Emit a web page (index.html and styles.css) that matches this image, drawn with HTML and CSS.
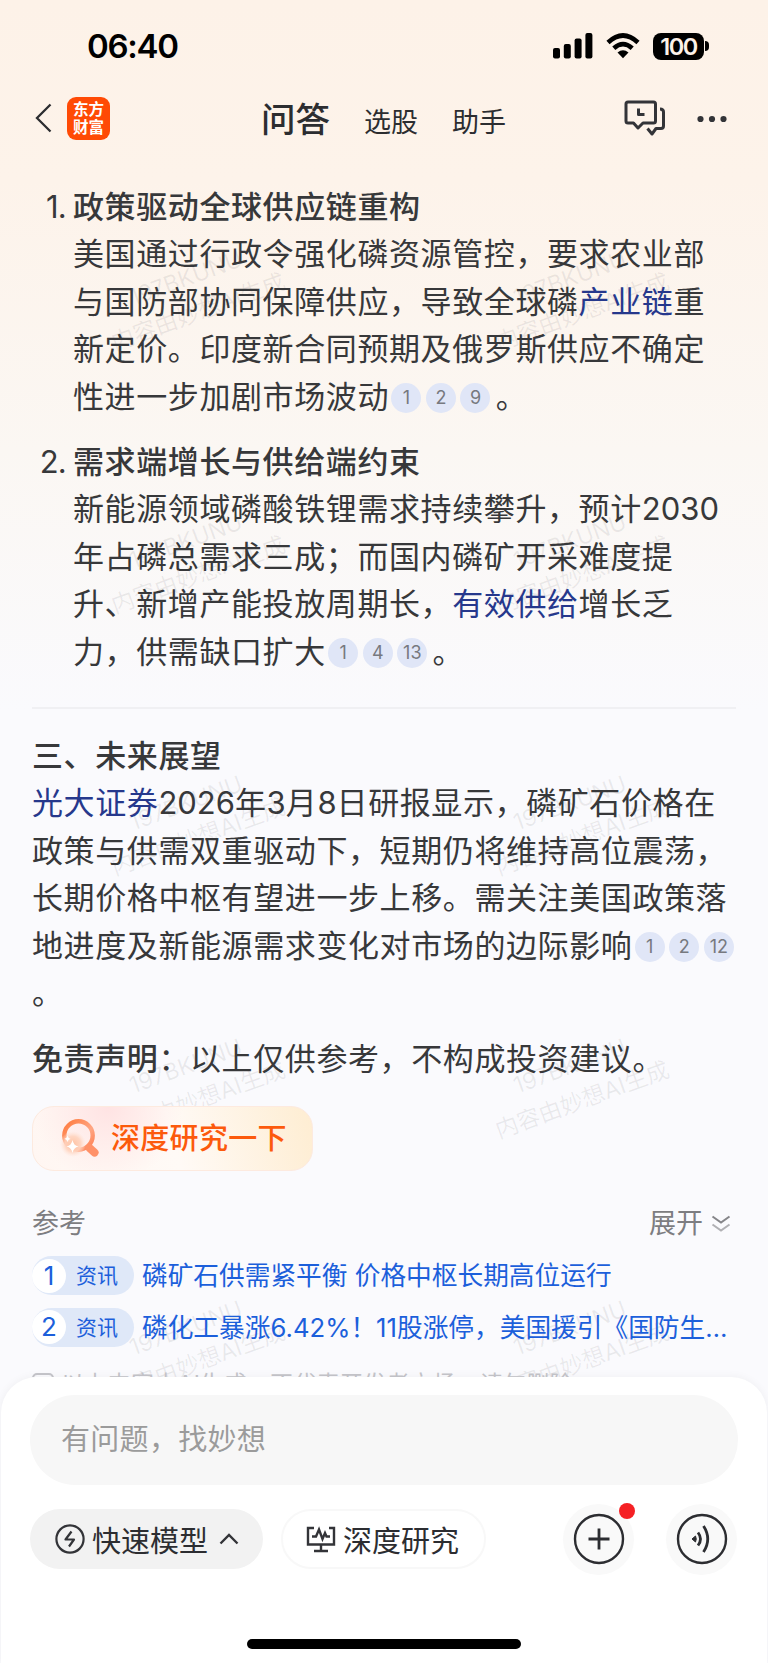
FILE: index.html
```html
<!DOCTYPE html>
<html lang="zh-CN">
<head>
    <meta charset="UTF-8">
    <meta name="viewport" content="width=device-width, initial-scale=1.0">
    <title>问答</title>
    <link rel="stylesheet" href="styles.css">
</head>
<body>
<div class="page">

    <div class="status-bar">
        <span class="time">06:40</span>
        <div class="status-icons">
            <svg class="signal" width="40" height="26" viewBox="0 0 40 26">
                <rect x="0" y="15" width="7" height="10.5" rx="2"/>
                <rect x="10.8" y="11" width="7" height="14.5" rx="2"/>
                <rect x="21.6" y="5.500" width="7" height="20" rx="2"/>
                <rect x="32.400" y="0" width="7" height="25.500" rx="2"/>
            </svg>
            <svg class="wifi" width="34" height="26" viewBox="0 0 34 26">
                <path d="M2 9.500 Q17 -4.500 32 9.500" fill="none" stroke="#000" stroke-width="4.600"/>
                <path d="M7.800 15.300 Q17 7 26.200 15.300" fill="none" stroke="#000" stroke-width="4.600"/>
                <path d="M11.500 19.500 Q17 14.800 22.500 19.500 L17 25.300 Z"/>
            </svg>
            <div class="battery">100</div>
            <div class="battery-tip"></div>
        </div>
    </div>

    <header class="nav">
        <svg class="back" width="18" height="30" viewBox="0 0 18 30">
            <path d="M15.500 1.500 L2 15 L15.500 28.500" fill="none" stroke="#2c2d30" stroke-width="2.300"/>
        </svg>
        <div class="logo">东方<br>财富</div>
        <div class="tabs">
            <span class="tab active">问答</span>
            <span class="tab">选股</span>
            <span class="tab">助手</span>
        </div>
        <svg class="history" width="42" height="36" viewBox="0 0 42 36" fill="none" stroke="#333438" stroke-width="3" stroke-linejoin="round">
            <path d="M4 2 H29.500 Q31.500 2 31.500 4 V21 Q31.500 23 29.500 23 H19 L14 28 L9.500 23 H4 Q2 23 2 21 V4 Q2 2 4 2 Z"/>
            <path d="M14.500 8.500 V14.500 H20.500"/>
            <path d="M36 9 Q39.500 9 39.500 12 V26 Q39.500 28.500 37 28.500 H32 L28 34 L23.500 28.500"/>
        </svg>
        <svg class="more" width="30" height="8" viewBox="0 0 30 8" fill="#333438">
            <circle cx="3.500" cy="4" r="3.100"/><circle cx="15" cy="4" r="3.100"/><circle cx="26.500" cy="4" r="3.100"/>
        </svg>
    </header>

    <main class="content">
        <div class="item">
            <span class="num">1.</span>
            <div>
                <b>政策驱动全球供应链重构</b><br>
                美国通过行政令强化磷资源管控，要求农业部<br>
                与国防部协同保障供应，导致全球磷<a>产业链</a>重<br>
                新定价。印度新合同预期及俄罗斯供应不确定<br>
                性进一步加剧市场波动<span class="refs"><i class="ref">1</i><i class="ref">2</i><i class="ref">9</i></span>。
            </div>
        </div>
        <div class="item">
            <span class="num">2.</span>
            <div>
                <b>需求端增长与供给端约束</b><br>
                新能源领域磷酸铁锂需求持续攀升，预计<span class="digits">2030</span><br>
                年占磷总需求三成；而国内磷矿开采难度提<br>
                升、新增产能投放周期长，<a>有效供给</a>增长乏<br>
                力，供需缺口扩大<span class="refs"><i class="ref">1</i><i class="ref">4</i><i class="ref">13</i></span>。
            </div>
        </div>

        <hr class="divider">

        <div class="section">
            <b>三、未来展望</b><br>
            <a>光大证券</a><span class="digits">2026</span>年<span class="digits">3</span>月<span class="digits">8</span>日研报显示，磷矿石价格在<br>
            政策与供需双重驱动下，短期仍将维持高位震荡，<br>
            长期价格中枢有望进一步上移。需关注美国政策落<br>
            地进度及新能源需求变化对市场的边际影响<i class="ref">1</i><i class="ref">2</i><i class="ref">12</i><br>
            。
        </div>
        <div class="section"><b>免责声明</b>：以上仅供参考，不构成投资建议。</div>

        <div class="research">
            <svg width="40" height="40" viewBox="0 0 40 40">
                <defs>
                    <linearGradient id="ring" x1="0" y1="0" x2="1" y2="1">
                        <stop offset="0" stop-color="#ff7a3c"/>
                        <stop offset="0.600" stop-color="#ffa684"/>
                        <stop offset="1" stop-color="#ff7e50"/>
                    </linearGradient>
                    <radialGradient id="glow">
                        <stop offset="0" stop-color="#ffc3a4"/>
                        <stop offset="0.600" stop-color="#ffd4bf" stop-opacity="0.900"/>
                        <stop offset="1" stop-color="#ffe4d8" stop-opacity="0"/>
                    </radialGradient>
                </defs>
                <circle cx="18.500" cy="17.500" r="14.200" fill="none" stroke="url(#ring)" stroke-width="4.400"/>
                <path d="M29.500 30 L34.500 34.500" stroke="#ff9168" stroke-width="8" stroke-linecap="round"/>
                <circle cx="13" cy="26" r="13" fill="url(#glow)"/>
                <path d="M12.500 22 Q13.500 27.500 18.500 28.500 Q13.500 29.500 12.500 35 Q11.500 29.500 6.500 28.500 Q11.500 27.500 12.500 22 Z" fill="#fff"/>
                <path d="M7.500 17.500 Q8 20 10.500 20.700 Q8 21.400 7.500 24 Q7 21.400 4.500 20.700 Q7 20 7.500 17.500 Z" fill="#fff"/>
            </svg>
            深度研究一下
        </div>

        <div class="ref-head">
            <span>参考</span>
            <span class="expand">展开
                <svg width="20" height="18" viewBox="0 0 20 18" fill="none" stroke-width="2">
                    <path d="M1.500 1.500 L10 7.500 L18.500 1.500" stroke="#858589"/>
                    <path d="M1.500 9.500 L10 15.500 L18.500 9.500" stroke="#b0b0b4"/>
                </svg>
            </span>
        </div>
        <div class="source">
            <div class="tag"><span class="tag-num">1</span>资讯</div>
            <span class="source-title">磷矿石供需紧平衡 价格中枢长期高位运行</span>
        </div>
        <div class="source">
            <div class="tag"><span class="tag-num">2</span>资讯</div>
            <span class="source-title">磷化工暴涨6.42%！11股涨停，美国援引《国防生…</span>
        </div>
        <div class="notice"><span class="notice-icon"></span>以上内容由AI生成，不代表开发者立场，请勿删除</div>

        <div class="watermarks">
            <div class="mark">197BKUNU<br>内容由妙想AI生成</div>
            <div class="mark">197BKUNU<br>内容由妙想AI生成</div>
            <div class="mark">197BKUNU<br>内容由妙想AI生成</div>
            <div class="mark">197BKUNU<br>内容由妙想AI生成</div>
            <div class="mark">197BKUNU<br>内容由妙想AI生成</div>
            <div class="mark">197BKUNU<br>内容由妙想AI生成</div>
            <div class="mark">197BKUNU<br>内容由妙想AI生成</div>
            <div class="mark">197BKUNU<br>内容由妙想AI生成</div>
            <div class="mark">197BKUNU<br>内容由妙想AI生成</div>
            <div class="mark">197BKUNU<br>内容由妙想AI生成</div>
        </div>
    </main>

    <footer class="sheet">
        <div class="input">有问题，找妙想</div>
        <div class="actions">
            <div class="pill pill-gray">
                <svg width="30" height="30" viewBox="0 0 30 30" fill="none" stroke="#333438" stroke-width="2.200">
                    <circle cx="15" cy="15" r="13.600"/>
                    <path d="M16.500 7.500 L10.500 15.500 H19 L14 22.500" stroke-linejoin="round"/>
                </svg>
                <span>快速模型</span>
                <svg class="caret" width="20" height="12" viewBox="0 0 20 12" fill="none" stroke="#333438" stroke-width="2.400">
                    <path d="M1.500 10.500 L10 2 L18.500 10.500"/>
                </svg>
            </div>
            <div class="pill pill-white">
                <svg width="30" height="28" viewBox="0 0 30 28" fill="none" stroke="#333438" stroke-width="2.400">
                    <path d="M8 3 H2 V19.500 H28 V3 H23"/>
                    <path d="M6 11.500 H10 L13 4.500 L16.500 14 L19 8 L20.500 11.500 H24"/>
                    <path d="M15 19.500 V26 M8 26 H22"/>
                </svg>
                <span>深度研究</span>
            </div>
            <div class="round plus">
                <svg width="52" height="52" viewBox="0 0 52 52" fill="none" stroke="#2c2d31" stroke-width="2.400">
                    <circle cx="26" cy="26" r="24"/>
                    <path d="M26 15.500 V36.500 M15.500 26 H36.500" stroke-width="2.800"/>
                </svg>
                <span class="dot"></span>
            </div>
            <div class="round">
                <svg width="52" height="52" viewBox="0 0 52 52" fill="none" stroke="#2c2d31" stroke-width="2.400">
                    <circle cx="26" cy="26" r="24"/>
                    <path d="M16 26 L19.500 23 Q21 26 19.500 29 Z" fill="#2c2d31" stroke-width="1"/>
                    <path d="M22 19.500 Q27 26 22 32.500 M27.500 13 Q36 26 27.500 39" stroke-width="2.800"/>
                </svg>
            </div>
        </div>
        <div class="home-bar"></div>
    </footer>

</div>
</body>
</html>
```

FILE: styles.css
```css
        body {
            font-family: Inter, "Noto Sans CJK SC", sans-serif;
            margin: 0;
            padding: 0;
            background-color: #fff;
        }

        .page {
            width: 768px;
            height: 1663px;
            overflow: hidden;
            display: flex;
            flex-direction: column;
            background: linear-gradient(#fdf2e8 0, #fdf3ea 180px, #fbf7f3 450px, #fafafd 710px, #fafafd 100%);
        }

        /* status bar */
        .status-bar {
            height: 92px;
            box-sizing: border-box;
            padding: 0 59px 0 87px;
            display: flex;
            align-items: center;
            justify-content: space-between;
            flex-shrink: 0;
        }

        .time {
            font-size: 33px;
            font-weight: 600;
            letter-spacing: -1.300px;
        }

        .status-icons {
            display: flex;
            align-items: center;
        }

        .wifi {
            margin: 0 13px 0 13px;
        }

        .battery {
            width: 51px;
            height: 27px;
            border-radius: 8px;
            background-color: #000;
            color: #fdf2e8;
            font-size: 23.500px;
            font-weight: 600;
            line-height: 27px;
            letter-spacing: -1.400px;
            text-align: center;
        }

        .battery-tip {
            width: 4px;
            height: 10px;
            margin-left: 1px;
            border-radius: 0 4px 4px 0;
            background-color: #000;
        }

        /* navigation */
        .nav {
            height: 91px;
            box-sizing: border-box;
            padding: 0 41px 0 35px;
            display: flex;
            align-items: flex-start;
            flex-shrink: 0;
            color: #2c2d30;
        }

        .back {
            margin-top: 11px;
        }

        .logo {
            width: 43px;
            height: 43px;
            box-sizing: border-box;
            margin: 5px 0 0 14px;
            padding-top: 4px;
            border-radius: 9px;
            background-color: #ff4a05;
            color: #fff;
            font-size: 15.5px;
            font-weight: 700;
            line-height: 18px;
            text-align: center;
        }

        .tabs {
            display: flex;
            align-items: baseline;
            margin: 1px 0 0 151px;
        }

        .tab {
            font-size: 27px;
            line-height: 54px;
            margin-right: 34px;
        }

        .tab.active {
            font-size: 34.500px;
            font-weight: 500;
        }

        .history {
            margin: 8px 0 0 84px;
        }

        .more {
            margin: 23px 0 0 auto;
        }

        /* answer */
        .content {
            position: relative;
            z-index: 0;
            height: 1194px;
            overflow: hidden;
            flex-shrink: 0;
            padding: 0 32px;
            color: #37383a;
            font-size: 31px;
            letter-spacing: 0.6px;
            line-height: 47.4px;
            white-space: nowrap;
        }

        .content b {
            font-weight: 500;
        }

        .content a {
            color: #26388c;
        }

        .item {
            display: flex;
            margin-bottom: 18px;
        }

        .num {
            width: 34px;
            margin-right: 7px;
            letter-spacing: -0.8px;
            text-align: right;
        }

        .digits {
            letter-spacing: 0;
        }

        .refs {
            margin-right: 3px;
        }

        .ref {
            display: inline-block;
            width: 30px;
            height: 30px;
            margin: 0 2.300px;
            border-radius: 50%;
            background-color: #e0e6f7;
            color: #77797f;
            font-size: 18px;
            font-style: normal;
            line-height: 30px;
            letter-spacing: 0;
            text-align: center;
            vertical-align: 4px;
        }

        .divider {
            height: 2px;
            margin: 32px 0 23px;
            border: none;
            background-color: #f0f0f3;
        }

        .section {
            margin-bottom: 18px;
        }

        .research {
            width: 281px;
            height: 65px;
            box-sizing: border-box;
            margin-top: 24px;
            padding-left: 27px;
            display: flex;
            align-items: center;
            gap: 11px;
            border: 1px solid #fdeadf;
            border-radius: 22px;
            background: radial-gradient(circle at 75px 0, #ffe3e3 0, rgba(255, 227, 227, 0) 75px), linear-gradient(75deg, #fff6f2 0%, #fffaf6 50%, #feedd2 100%);
            color: #fc5a0c;
            font-size: 29px;
            font-weight: 500;
            letter-spacing: 0.300px;
        }

        .ref-head {
            display: flex;
            justify-content: space-between;
            margin: 29px 0 9px;
            padding-right: 5px;
            color: #7d7d81;
            font-size: 27px;
            letter-spacing: 0;
        }

        .expand {
            display: flex;
            align-items: center;
            gap: 8px;
        }

        .source {
            display: flex;
            align-items: center;
            height: 39px;
            margin-bottom: 12.500px;
            color: #1c5fdb;
        }

        .tag {
            display: flex;
            align-items: center;
            width: 102px;
            height: 39px;
            margin-right: 8px;
            border-radius: 20px;
            background-color: #dfe8f8;
            font-size: 21px;
            letter-spacing: 0;
        }

        .tag-num {
            width: 34px;
            height: 34px;
            margin-right: 10px;
            border-radius: 50%;
            background-color: #fff;
            font-size: 26px;
            line-height: 34px;
            text-align: center;
        }

        .source-title {
            font-size: 25.700px;
            letter-spacing: 0;
        }

        .notice {
            display: flex;
            align-items: flex-start;
            gap: 7px;
            margin-top: 23px;
            color: #c5c5ca;
            font-size: 23px;
            line-height: 28px;
            letter-spacing: 0.300px;
        }

        .notice-icon {
            width: 22px;
            height: 22px;
            box-sizing: border-box;
            margin-top: 3px;
            border: 2px solid #c5c5ca;
            border-radius: 5px;
        }

        /* tiled text behind the answer */
        .watermarks {
            position: absolute;
            z-index: -1;
            top: -19px;
            left: 0;
            display: grid;
            grid-template-columns: 384px 384px;
            grid-auto-rows: 262.500px;
        }

        .mark {
            align-self: center;
            color: rgba(60, 60, 70, 0.090);
            font-size: 23px;
            letter-spacing: 0;
            line-height: 36px;
            text-align: center;
            transform: rotate(-20deg);
        }

        /* bottom sheet */
        .sheet {
            flex: 1;
            margin: 0 1px;
            padding: 18px 29px 0;
            border-radius: 36px 36px 0 0;
            background-color: #fff;
            box-shadow: 0 0 10px rgba(0, 0, 0, 0.050);
            z-index: 1;
        }

        .input {
            height: 90px;
            box-sizing: border-box;
            padding-left: 31px;
            border-radius: 45px;
            background-color: #f7f7f7;
            color: #9b9b9b;
            font-size: 29px;
            line-height: 90px;
            letter-spacing: 0.300px;
        }

        .actions {
            display: flex;
            align-items: center;
            height: 72px;
            margin-top: 18px;
            color: #2c2d31;
            font-size: 29px;
        }

        .pill {
            display: flex;
            align-items: center;
            box-sizing: border-box;
            height: 60px;
            border-radius: 30px;
            padding-left: 25px;
            gap: 7px;
        }

        .pill-gray {
            width: 233px;
            background-color: #f2f2f2;
        }

        .pill-white {
            width: 205px;
            margin-left: 18px;
            padding-left: 23px;
            border: 2px solid #f8f8f8;
        }

        .caret {
            margin-left: 4px;
        }

        .round {
            position: relative;
            display: flex;
            align-items: center;
            justify-content: center;
            width: 71px;
            height: 71px;
            border-radius: 50%;
            background-color: #f9f9f9;
            margin-left: 32px;
        }

        .round.plus {
            margin-left: 77px;
        }

        .dot {
            position: absolute;
            top: -1px;
            right: -1px;
            width: 16px;
            height: 16px;
            border-radius: 50%;
            background-color: #f52024;
        }

        .home-bar {
            width: 274px;
            height: 10px;
            margin: 64px auto 0;
            border-radius: 5px;
            background-color: #000;
        }
```
